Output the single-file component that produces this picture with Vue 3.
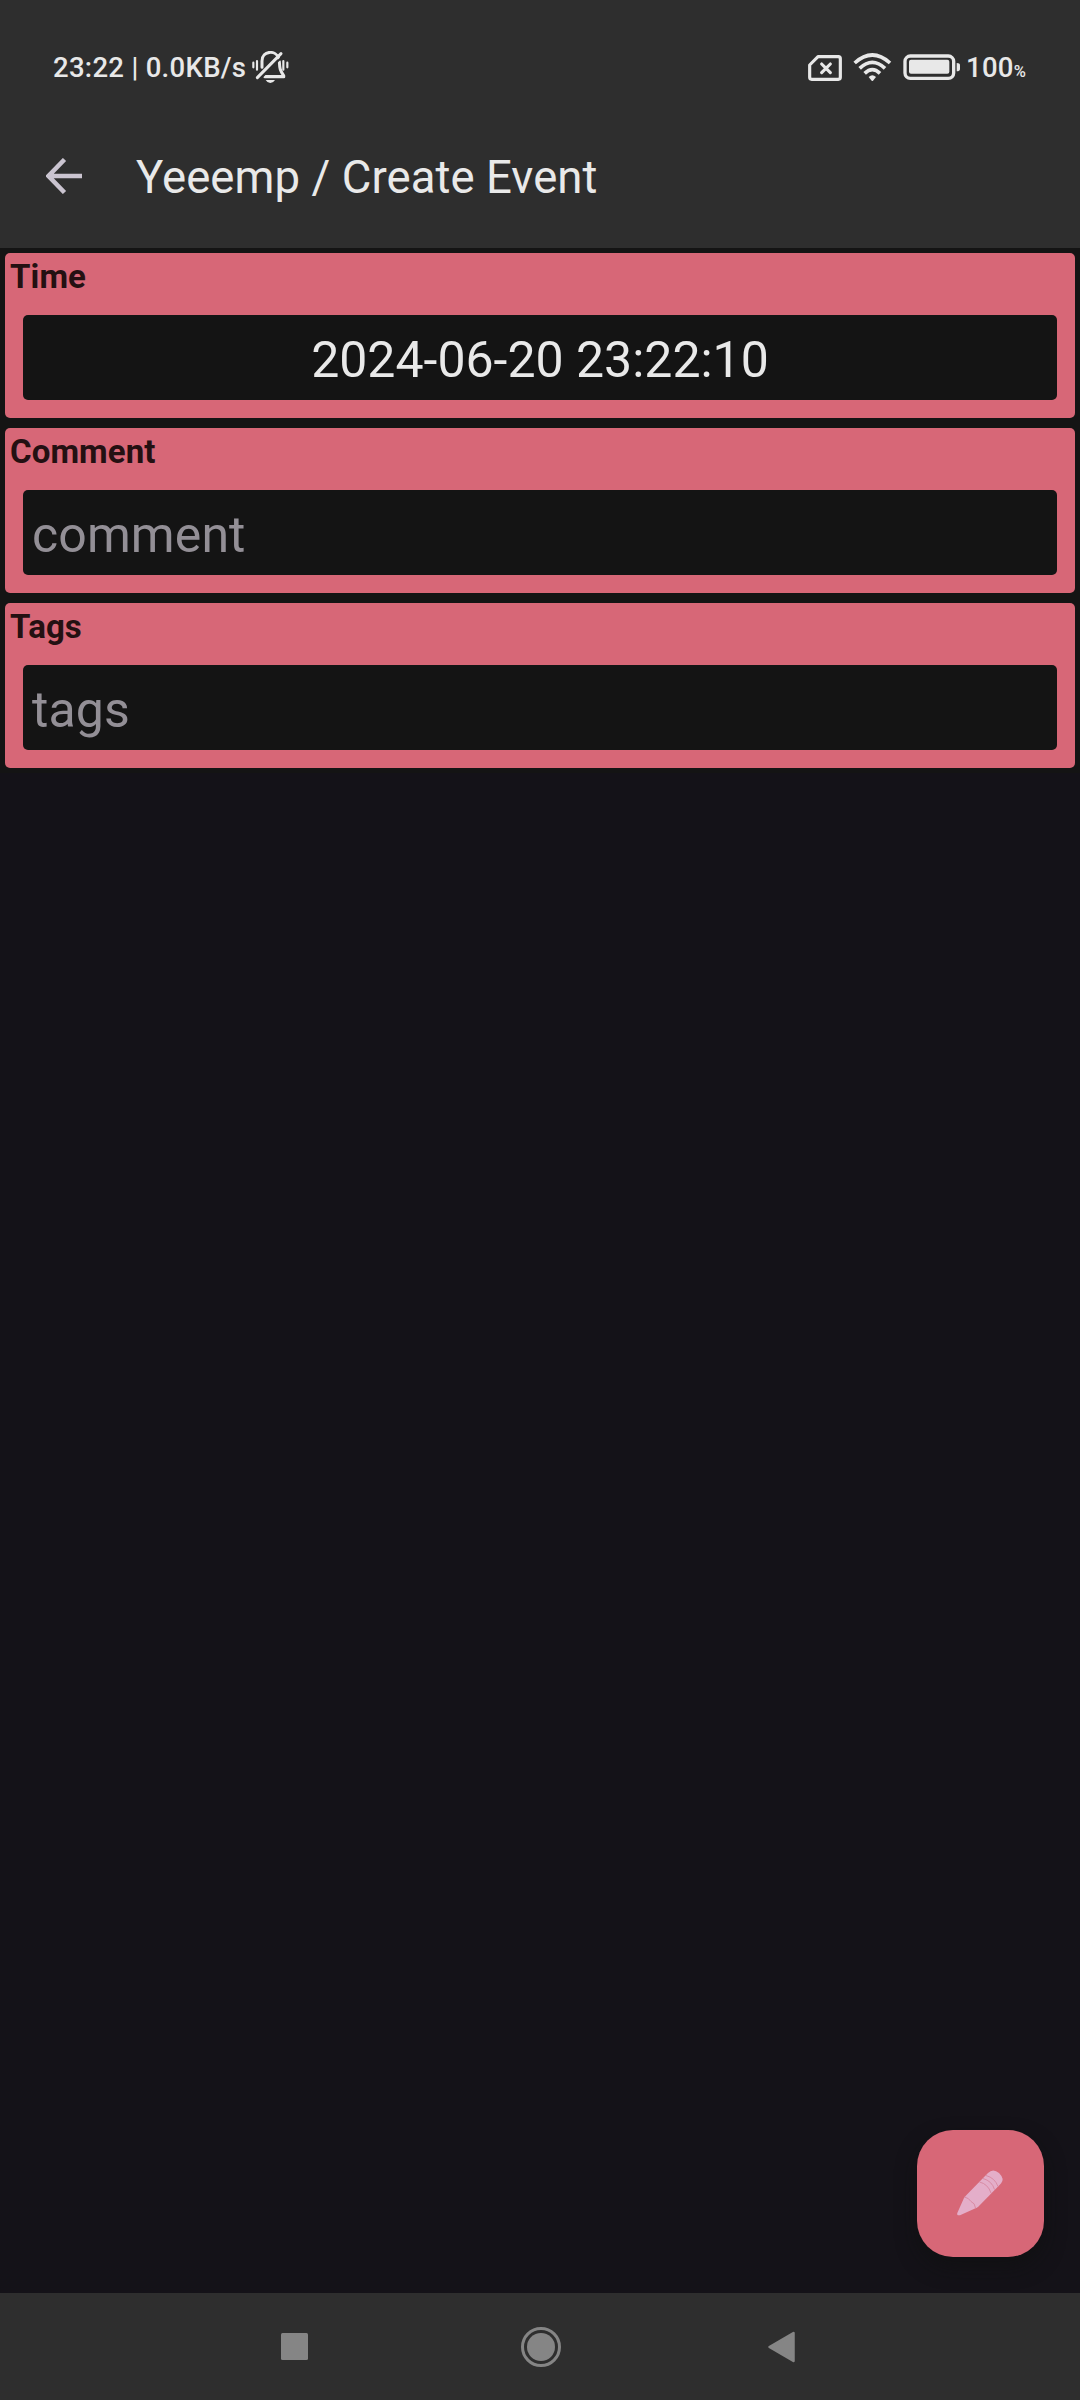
<script setup>
const fields = [
  { label: 'Time', text: '2024-06-20 23:22:10', kind: 'value' },
  { label: 'Comment', text: 'comment', kind: 'hint' },
  { label: 'Tags', text: 'tags', kind: 'hint' },
]
</script>

<template>
  <div class="screen">
    <header class="top">
      <div class="status">
        <span class="clock">23:22 | 0.0KB/s</span>
        <svg class="bell" width="38" height="32" viewBox="36 30 114 96" fill="none" stroke="#e8e8e8" stroke-linecap="round">
          <path d="M66 79V60C66 27 109 27 116 52M118 62C119 83 120 88 131 104" stroke-width="9" />
          <path d="M75 107H131" stroke-width="10" />
          <path d="M60 114L130 44" stroke="#2e2e2e" stroke-width="6" stroke-linecap="butt" />
          <path d="M52 110L123 38" stroke-width="9" />
          <path d="M40 65V79M51 60V86M130 60V86M142 65V79" stroke-width="6.500" />
          <path d="M77 117H105Q100 126 91 126T77 117Z" fill="#e8e8e8" stroke="none" />
        </svg>
        <span class="grow"></span>
        <svg class="sim" width="35" height="32" viewBox="54 30 105 96" fill="none" stroke="#e8e8e8">
          <path d="M84 47H145Q151 47 151 53V109Q151 115 145 115H65Q59 115 59 109V72Z" stroke-width="9.500" stroke-linejoin="round" />
          <path d="M95 69L121 95M121 69L95 95" stroke-width="9.500" stroke-linecap="round" />
        </svg>
        <svg class="wifi" width="39" height="32" viewBox="189 30 117 96" fill="none" stroke="#e8e8e8" stroke-width="11">
          <path d="M194 66Q247 18 300 66" />
          <path d="M209 82Q247 46 285 82" />
          <path d="M224 97Q247 75 270 97" />
          <path d="M236 108Q247 97 258 108L249 119Q247 121 245 119Z" fill="#e8e8e8" stroke="none" />
        </svg>
        <svg class="battery" width="57" height="32" viewBox="339 30 171 96">
          <rect x="345" y="45" width="146" height="67" rx="16" fill="none" stroke="#e8e8e8" stroke-width="10" />
          <rect x="357" y="56" width="121" height="42" rx="6" fill="#e8e8e8" />
          <path d="M500 66Q510 66 510 73V84Q510 91 500 91Z" fill="#e8e8e8" />
        </svg>
        <span class="percent">100<small>%</small></span>
      </div>
      <div class="bar">
        <svg class="back" width="36" height="36" viewBox="0 0 36 36" fill="none" stroke="#cac4d0" stroke-width="4.500">
          <path d="M36 18H4M18.500 1.500L2.500 18L18.500 34.500" />
        </svg>
        <h1>Yeeemp / Create Event</h1>
      </div>
    </header>

    <main>
      <section class="list">
        <div v-for="f in fields" :key="f.label" class="card">
          <div class="label">{{ f.label }}</div>
          <div class="input" :class="f.kind">{{ f.text }}</div>
        </div>
      </section>
      <div class="fab">
        <svg width="127" height="127" viewBox="0 0 127 127">
          <path d="M40.300 83L47 68Q48 66.500 49 65.500L71 43Q76 38 82 43Q88 49 84 53.500L61.500 76.500Q60 78 58 78.500L43 85.200Q39.500 86 40.300 83Z" fill="#e4aec9" />
          <path d="M47.500 67Q52 68 54 71.500Q58 73 58.500 78M62.500 52Q71 54 74 63M66 48.500Q75 51 77.500 59.500M69 45.500Q78 48 81 56.500" fill="none" stroke="#d98ba4" stroke-width="1" />
        </svg>
      </div>
    </main>

    <nav>
      <svg width="1080" height="107" viewBox="0 0 1080 107" fill="#858585">
        <rect x="281" y="40" width="27" height="27" rx="1.500" />
        <circle cx="541" cy="54" r="14" />
        <circle cx="541" cy="54" r="18.500" fill="none" stroke="#858585" stroke-width="3" />
        <path d="M769.500 54L793.500 40V68Z" stroke="#858585" stroke-width="2.500" stroke-linejoin="round" />
      </svg>
    </nav>
  </div>
</template>

<style>
body { margin: 0; background: #141218; }
</style>

<style scoped>
.screen {
  width: 1080px;
  height: 2400px;
  display: flex;
  flex-direction: column;
  background: #141218;
  font-family: Roboto, sans-serif;
  overflow: hidden;
}
.top { height: 248px; background: #2e2e2e; flex: none; }
.status {
  height: 132px;
  box-sizing: border-box;
  padding: 2px 52px 0 53px;
  display: flex;
  align-items: center;
  color: #e8e8e8;
  font-size: 27.5px;
  font-weight: 500;
  white-space: nowrap;
}
.clock { width: 199px; letter-spacing: 0.3px; }
.grow { flex: 1; }
.sim { margin-right: 10px; }
.wifi { margin-right: 11px; }
.battery { margin-right: 6px; }
.percent { width: 62px; letter-spacing: 0.3px; }
.percent small { font-size: 16.5px; }
.bar { height: 88px; display: flex; align-items: center; padding-left: 46px; }
h1 {
  margin: 3px 0 0 54px;
  color: #e9e9e9;
  font-size: 45.5px;
  font-weight: 400;
  line-height: 54px;
  letter-spacing: 0.07px;
  white-space: nowrap;
}
main { flex: 1; display: flex; flex-direction: column; justify-content: space-between; }
.list {
  display: flex;
  flex-direction: column;
  gap: 10px;
  padding: 5px;
  background: #141414;
}
.card {
  height: 165px;
  box-sizing: border-box;
  padding: 0 18px 18px;
  display: flex;
  flex-direction: column;
  justify-content: space-between;
  border-radius: 5px;
  background: #d76777;
}
.label {
  margin-left: -13px;
  padding-top: 4px;
  color: #241012;
  font-size: 33px;
  font-weight: 700;
  line-height: 39px;
  letter-spacing: 0.1px;
}
.input {
  height: 85px;
  box-sizing: border-box;
  padding: 3px 9px 0;
  border-radius: 5px;
  background: #141414;
  font-size: 50px;
  line-height: 84px;
}
.value { color: #e9e9e9; text-align: center; }
.hint { color: #938f96; letter-spacing: 0.1px; }
.fab {
  width: 127px;
  height: 127px;
  align-self: flex-end;
  margin: 0 36px 36px 0;
  border-radius: 36px;
  background: #d76777;
  box-shadow: 0 10px 20px rgba(14, 15, 14, 0.5);
}
nav { height: 107px; background: #2e2e2e; flex: none; }
svg { display: block; flex: none; }
</style>
